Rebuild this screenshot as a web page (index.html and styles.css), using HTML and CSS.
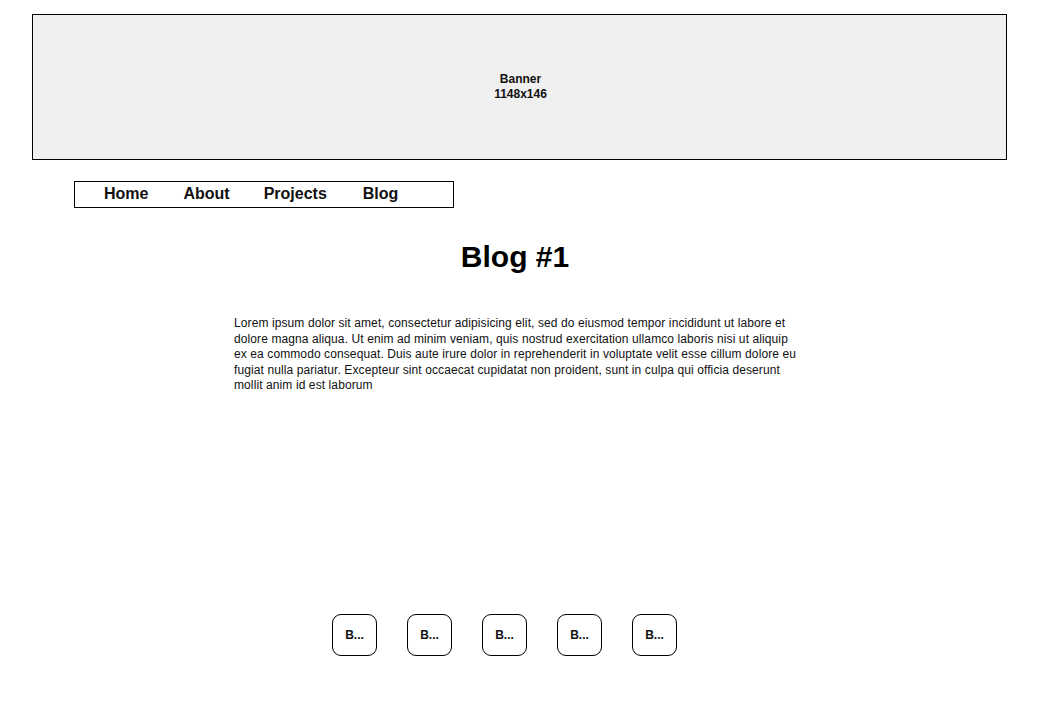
FILE: index.html
```html
<!DOCTYPE html>
<html>
<head>
<meta charset="utf-8">
<link rel="stylesheet" href="styles.css">
</head>
<body>
<div class="banner"><div class="banner-label">Banner<br>1148x146</div></div>
<nav class="nav">
  <span class="nav-item">Home</span>
  <span class="nav-item">About</span>
  <span class="nav-item">Projects</span>
  <span class="nav-item">Blog</span>
</nav>
<h1 class="title">Blog #1</h1>
<p class="body-text">Lorem ipsum dolor sit amet, consectetur adipisicing elit, sed do eiusmod tempor incididunt ut labore et dolore magna aliqua. Ut enim ad minim veniam, quis nostrud exercitation ullamco laboris nisi ut aliquip ex ea commodo consequat. Duis aute irure dolor in reprehenderit in voluptate velit esse cillum dolore eu fugiat nulla pariatur. Excepteur sint occaecat cupidatat non proident, sunt in culpa qui officia deserunt mollit anim id est laborum</p>
<div class="pager">
  <div class="page-btn">B...</div>
  <div class="page-btn">B...</div>
  <div class="page-btn">B...</div>
  <div class="page-btn">B...</div>
  <div class="page-btn">B...</div>
</div>
</body>
</html>
```
FILE: styles.css
```css
html, body {
  margin: 0;
  padding: 0;
  background: #fff;
  font-family: "Liberation Sans", Arial, sans-serif;
  color: #000;
}
body {
  padding-top: 14px;
}
.banner {
  box-sizing: border-box;
  margin-left: 32px;
  width: 975px;
  height: 146px;
  background: #f0f0f0;
  border: 1px solid #000;
  display: flex;
  align-items: center;
  justify-content: center;
}
.banner-label {
  font-size: 12px;
  font-weight: bold;
  line-height: 15px;
  text-align: center;
  color: #111;
  margin-top: 0;
  padding-left: 2px;
}
.nav {
  box-sizing: border-box;
  margin: 21px 0 0 74px;
  width: 380px;
  height: 27px;
  border: 1px solid #000;
  display: flex;
  align-items: center;
  gap: 35px;
  padding-left: 29px;
}
.nav-item {
  font-size: 16px;
  font-weight: bold;
  color: #111;
  margin-top: -2px;
}
.nav-item:nth-child(3) {
  margin-left: -1px;
}
.nav-item:nth-child(4) {
  margin-left: 1px;
}
.title {
  width: 1030px;
  margin: 31px 0 0 0;
  text-align: center;
  font-size: 30px;
  line-height: 36px;
  font-weight: bold;
}
.body-text {
  width: 566px;
  margin: 41px 0 0 234px;
  font-size: 12px;
  line-height: 15.5px;
  letter-spacing: 0.1px;
  color: #111;
}
.pager {
  display: flex;
  gap: 30px;
  margin: 220px 0 0 332px;
}
.page-btn {
  box-sizing: border-box;
  width: 45px;
  height: 42px;
  border: 1px solid #000;
  border-radius: 9px;
  display: flex;
  align-items: center;
  justify-content: center;
  font-size: 12px;
  font-weight: bold;
  color: #111;
}
```
